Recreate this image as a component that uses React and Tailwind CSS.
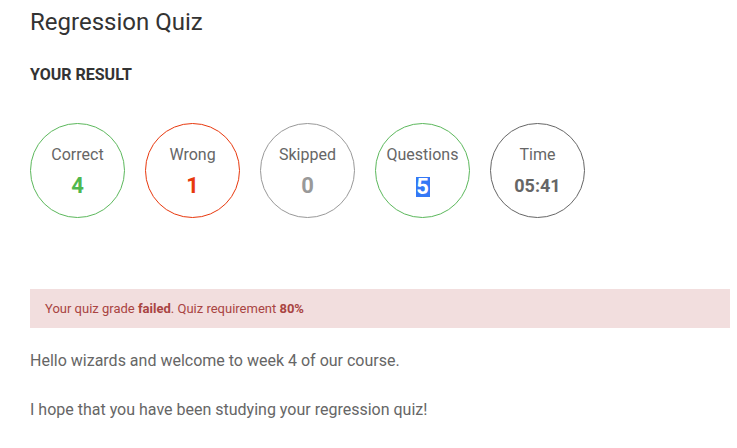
import React from 'react';

const stats = [
  { label: 'Correct', value: '4', ring: 'border-[#5cb85c]', text: 'text-[#4fb84f] text-[22px]' },
  { label: 'Wrong', value: '1', ring: 'border-[#e8380d]', text: 'text-[#e8380d] text-[22px]' },
  { label: 'Skipped', value: '0', ring: 'border-[#999999]', text: 'text-[#999999] text-[22px]' },
  { label: 'Questions', value: '5', ring: 'border-[#5cb85c]', text: 'text-white text-[22px]', selected: true },
  { label: 'Time', value: '05:41', ring: 'border-[#666666]', text: 'text-[#666666] text-[18px]' },
];

function App() {
  return (
    <div className="min-h-screen bg-white pl-[30px] pr-[7px] pt-[7px] font-['Roboto',sans-serif] text-[#333]">
      <h1 className="text-[24px] leading-[30px] font-normal text-[#333]">Regression Quiz</h1>

      <h2 className="mt-[30px] text-[16px] leading-[16px] font-bold text-[#333]">YOUR RESULT</h2>

      {/* Result circles */}
      <div className="mt-[40px] flex gap-[20px]">
        {stats.map((s) => (
          <div
            key={s.label}
            className={`w-[95px] h-[95px] rounded-full border ${s.ring} flex flex-col items-center pt-[21px]`}
          >
            <span className="text-[16px] leading-[20px] text-[#666]">{s.label}</span>
            <span className={`mt-[8px] font-bold leading-[26px] ${s.text}`}>
              {s.selected ? (
                <span className="inline-block bg-[#3478f6] w-[14px] h-[20px] leading-[20px] text-center align-middle">
                  {s.value}
                </span>
              ) : (
                s.value
              )}
            </span>
          </div>
        ))}
      </div>

      {/* Alert */}
      <div className="mt-[71px] bg-[#f2dede] h-[39px] flex items-center px-[15px] text-[13px] text-[#a94442]">
        <span>
          Your quiz grade <b>failed</b>. Quiz requirement <b>80%</b>
        </span>
      </div>

      <div className="mt-[22px] text-[16px] leading-[22px] text-[#666]">
        <p>Hello wizards and welcome to week 4 of our course.</p>
        <p className="mt-[27px]">I hope that you have been studying your regression quiz!</p>
      </div>
    </div>
  );
}

export default App;
